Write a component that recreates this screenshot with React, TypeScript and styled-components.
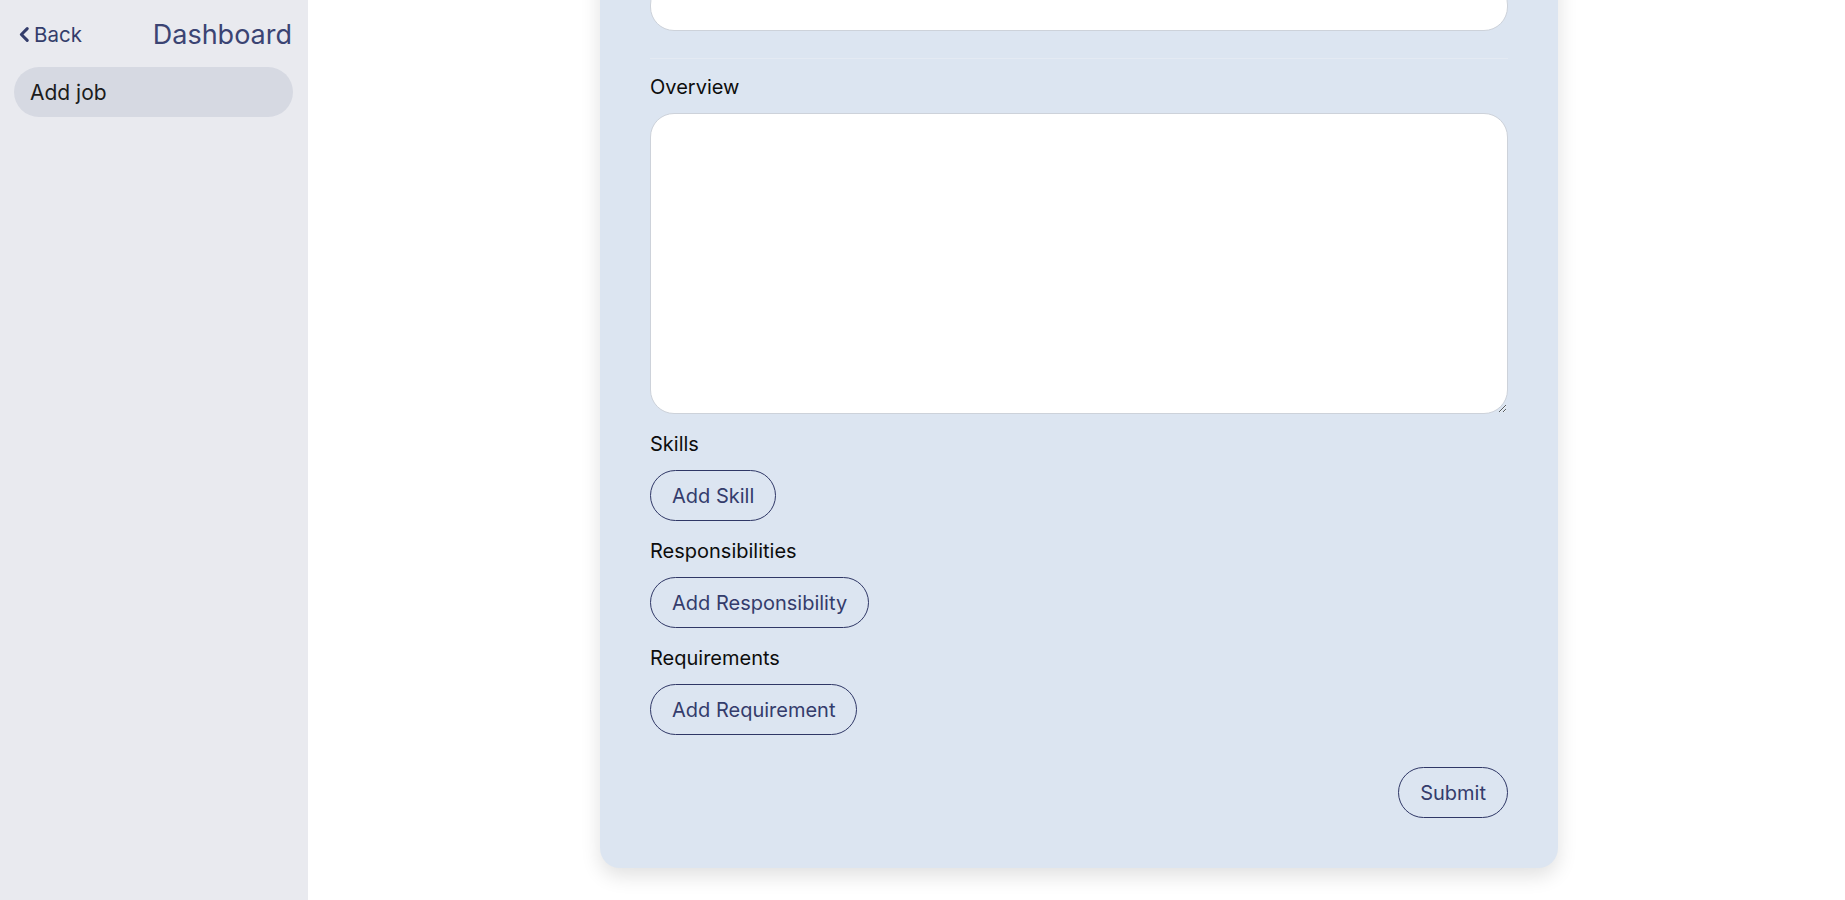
import React, { useLayoutEffect, useRef } from "react";
import styled, { createGlobalStyle } from "styled-components";

const GlobalStyle = createGlobalStyle`
  html, body {
    margin: 0;
    height: 100%;
    overflow: hidden;
    background: #ffffff;
    font-family: Inter, "Liberation Sans", sans-serif;
  }
  * {
    box-sizing: border-box;
  }
`;

const Layout = styled.div`
  display: flex;
  height: 100vh;
`;

const Sidebar = styled.aside`
  flex: 0 0 308px;
  height: 100vh;
  background: #e9eaef;
  padding: 14px 15px 0 14px;
  display: flex;
  flex-direction: column;
  gap: 13px;
`;

const SideHeader = styled.div`
  display: flex;
  align-items: center;
  justify-content: space-between;
  height: 40px;
  padding: 0 1px 0 5px;
`;

const BackLink = styled.a`
  display: flex;
  align-items: center;
  gap: 5px;
  color: #343d6b;
  font-size: 20.5px;
  cursor: pointer;
`;

const SideTitle = styled.span`
  color: #3b4473;
  font-size: 27px;
`;

const NavItem = styled.div<{ $active?: boolean }>`
  height: 50px;
  display: flex;
  align-items: center;
  padding: 0 16px;
  border-radius: 999px;
  background: ${(p) => (p.$active ? "#d6d9e2" : "transparent")};
  color: #1c1c1c;
  font-size: 21px;
`;

const Main = styled.main`
  flex: 1;
  height: 100vh;
  overflow-y: auto;
  padding: 32px 0 32px 5px;
  scrollbar-width: none;
  &::-webkit-scrollbar {
    display: none;
  }
`;

const Card = styled.form`
  width: 958px;
  margin: 0 auto;
  padding: 50px;
  background: #dce5f1;
  border-radius: 20px;
  box-shadow: 0 8px 20px rgba(0, 0, 0, 0.12);
  display: flex;
  flex-direction: column;
  gap: 17px;
`;

const Field = styled.div`
  display: flex;
  flex-direction: column;
  align-items: flex-start;
  gap: 12px;
`;

const Label = styled.label`
  color: #0d0d0d;
  font-size: 20px;
  line-height: 27px;
`;

const Input = styled.input`
  width: 100%;
  height: 50px;
  border: 1px solid #cdd2da;
  border-radius: 24px;
  background: #ffffff;
  padding: 0 20px;
  font: inherit;
  font-size: 20px;
  outline: none;
`;

const TextArea = styled.textarea`
  width: 100%;
  height: 301px;
  border: 1px solid #cdd2da;
  border-radius: 24px;
  background: #ffffff;
  padding: 16px 20px;
  font: inherit;
  font-size: 20px;
  outline: none;
`;

const Divider = styled.hr`
  width: 100%;
  border: none;
  border-top: 1px solid #e4eaf3;
  margin: 10px 0 -2px;
`;

const OutlineButton = styled.button`
  height: 51px;
  padding: 0 21px;
  border: 1px solid #2f3766;
  border-radius: 999px;
  background: transparent;
  color: #343c6c;
  font: inherit;
  font-size: 20px;
  cursor: pointer;
`;

const Footer = styled.div`
  display: flex;
  justify-content: flex-end;
  margin-top: 15px;
`;

const Chevron = () => (
  <svg width="10" height="15" viewBox="0 0 10 15" fill="none">
    <path
      d="M8.2 1.6L2.4 7.5l5.8 5.9"
      stroke="currentColor"
      strokeWidth="3"
      strokeLinecap="round"
      strokeLinejoin="round"
    />
  </svg>
);

const topFields = ["Job title", "Company", "Location", "Salary"];
const listFields = [
  { label: "Skills", action: "Add Skill" },
  { label: "Responsibilities", action: "Add Responsibility" },
  { label: "Requirements", action: "Add Requirement" },
];

const App = () => {
  const mainRef = useRef<HTMLElement>(null);

  useLayoutEffect(() => {
    if (mainRef.current) {
      mainRef.current.scrollTop = mainRef.current.scrollHeight;
    }
  }, []);

  return (
    <Layout>
      <GlobalStyle />
      <Sidebar>
        <SideHeader>
          <BackLink>
            <Chevron />
            Back
          </BackLink>
          <SideTitle>Dashboard</SideTitle>
        </SideHeader>
        <NavItem $active>Add job</NavItem>
      </Sidebar>

      <Main ref={mainRef}>
        <Card onSubmit={(e) => e.preventDefault()}>
          {topFields.map((name) => (
            <Field key={name}>
              <Label>{name}</Label>
              <Input />
            </Field>
          ))}

          <Divider />

          <Field>
            <Label>Overview</Label>
            <TextArea />
          </Field>

          {listFields.map((f) => (
            <Field key={f.label}>
              <Label>{f.label}</Label>
              <OutlineButton type="button">{f.action}</OutlineButton>
            </Field>
          ))}

          <Footer>
            <OutlineButton type="submit">Submit</OutlineButton>
          </Footer>
        </Card>
      </Main>
    </Layout>
  );
};

export default App;
